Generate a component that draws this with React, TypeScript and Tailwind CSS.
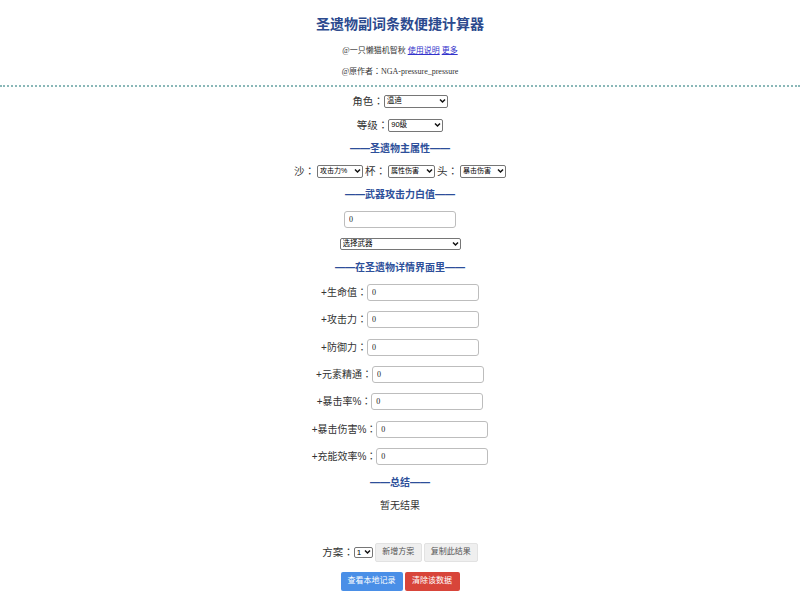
import React from "react";

const sans = "font-['Liberation_Sans','Noto_Sans_CJK_SC',sans-serif]";
const serif = "font-['Liberation_Serif','Noto_Sans_CJK_SC',serif]";
const jp = "font-['Noto_Sans_CJK_JP',sans-serif]";

function Colon() {
  return <span className={jp}>：</span>;
}

function Label({ text, size = "text-[10.5px]" }: { text: string; size?: string }) {
  return (
    <span className={`${size} leading-[14px] text-[#333] whitespace-nowrap`}>
      {text}
      <Colon />
    </span>
  );
}

function Chevron() {
  return (
    <svg className="pointer-events-none absolute right-[2px] top-1/2 -translate-y-1/2" width="7" height="5" viewBox="0 0 7 5">
      <path d="M1 1 L3.5 3.5 L6 1" fill="none" stroke="#111" strokeWidth="1.5" />
    </svg>
  );
}

function Sel({ w, h = "h-[13px]", value, options, text = "text-[7.5px]" }: { w: string; h?: string; value: string; options: string[]; text?: string }) {
  return (
    <div className={`relative flex ${w} ${h} shrink-0`}>
      <select
        defaultValue={value}
        className={`block appearance-none w-full h-full ${text} leading-[10px] text-black bg-white border border-[#767676] rounded-[2px] pl-[2px] pr-[10px] py-0 m-0 ${sans}`}
      >
        {options.map((o) => (
          <option key={o}>{o}</option>
        ))}
      </select>
      <Chevron />
    </div>
  );
}

function Header({ text, h }: { text: string; h: string }) {
  return (
    <div className={`${h} flex items-center justify-center text-[10px] font-bold text-[#2d4f9a]`}>
      ——{text}——
    </div>
  );
}

const inputCls = `w-[112px] h-[17px] border border-[#bdbdbd] rounded-[3px] bg-white px-[4px] text-[8px] text-[#222] ${serif}`;

function Field({ label, h }: { label: string; h: string }) {
  return (
    <div className={`${h} flex items-center justify-center`}>
      <Label text={label} size="text-[10px]" />
      <input defaultValue="0" className={inputCls} />
    </div>
  );
}

export default function App() {
  return (
    <div className={`w-full min-h-[600px] bg-white flex flex-col ${sans}`}>
      <div className="pt-[14px] text-center text-[14px] leading-[20px] font-bold text-[#2c4a8e]">
        圣遗物副词条数便捷计算器
      </div>
      <div className={`mt-[11px] text-center text-[8px] leading-[12px] text-[#333] ${serif}`}>
        @一只懒猫机智秋{" "}
        <a href="#" className="text-[#3333cc] underline">使用说明</a>{" "}
        <a href="#" className="text-[#3333cc] underline">更多</a>
      </div>
      <div className={`mt-[8px] text-center text-[8px] leading-[12px] text-[#333] ${serif}`}>
        @原作者<Colon />NGA-pressure_pressure
      </div>
      <div className="mt-[7px] border-t-2 border-dotted border-[#8ab8b8]" />

      <div className="mt-[2px] h-[24px] flex items-center justify-center">
        <Label text="角色" />
        <Sel w="w-[64px]" value="温迪" options={["温迪"]} />
      </div>
      <div className="h-[24px] flex items-center justify-center">
        <Label text="等级" />
        <Sel w="w-[55px]" value="90级" options={["90级"]} />
      </div>
      <Header text="圣遗物主属性" h="h-[22px]" />
      <div className="h-[24px] flex items-center justify-center gap-[2px]">
        <Label text="沙" />
        <Sel w="w-[46px]" value="攻击力%" options={["攻击力%"]} text="text-[7px]" />
        <Label text="杯" />
        <Sel w="w-[47px]" value="属性伤害" options={["属性伤害"]} text="text-[7px]" />
        <Label text="头" />
        <Sel w="w-[46px]" value="暴击伤害" options={["暴击伤害"]} text="text-[7px]" />
      </div>
      <Header text="武器攻击力白值" h="h-[22px]" />
      <div className="h-[28px] flex items-center justify-center">
        <input defaultValue="0" className={inputCls} />
      </div>
      <div className="h-[22px] flex items-center justify-center">
        <Sel w="w-[121px]" h="h-[12px]" value="选择武器" options={["选择武器"]} />
      </div>
      <Header text="在圣遗物详情界面里" h="h-[24px]" />
      <Field label="+生命值" h="h-[26px]" />
      <Field label="+攻击力" h="h-[29px]" />
      <Field label="+防御力" h="h-[26px]" />
      <Field label="+元素精通" h="h-[28px]" />
      <Field label="+暴击率%" h="h-[26px]" />
      <Field label="+暴击伤害%" h="h-[30px]" />
      <Field label="+充能效率%" h="h-[24px]" />
      <Header text="总结" h="h-[28px]" />
      <div className="h-[18px] flex items-center justify-center text-[10px] text-[#333]">暂无结果</div>

      <div className="mt-[26px] h-[24px] flex items-center justify-center">
        <Label text="方案" />
        <Sel w="w-[19px]" h="h-[11px]" value="1" options={["1"]} text="text-[8px]" />
        <button className="ml-[2px] w-[47px] h-[19px] bg-[#efefef] border border-[#e2e2e2] rounded-[2px] text-[8px] text-[#555]">
          新增方案
        </button>
        <button className="ml-[2px] w-[54px] h-[19px] bg-[#efefef] border border-[#e2e2e2] rounded-[2px] text-[8px] text-[#555]">
          复制此结果
        </button>
      </div>
      <div className="h-[34px] flex items-center justify-center gap-[2px]">
        <button className="w-[62px] h-[19px] bg-[#4a8fe7] rounded-[2px] text-[8px] text-white">
          查看本地记录
        </button>
        <button className="w-[55px] h-[19px] bg-[#d8453a] rounded-[2px] text-[8px] text-white">
          清除该数据
        </button>
      </div>
    </div>
  );
}
